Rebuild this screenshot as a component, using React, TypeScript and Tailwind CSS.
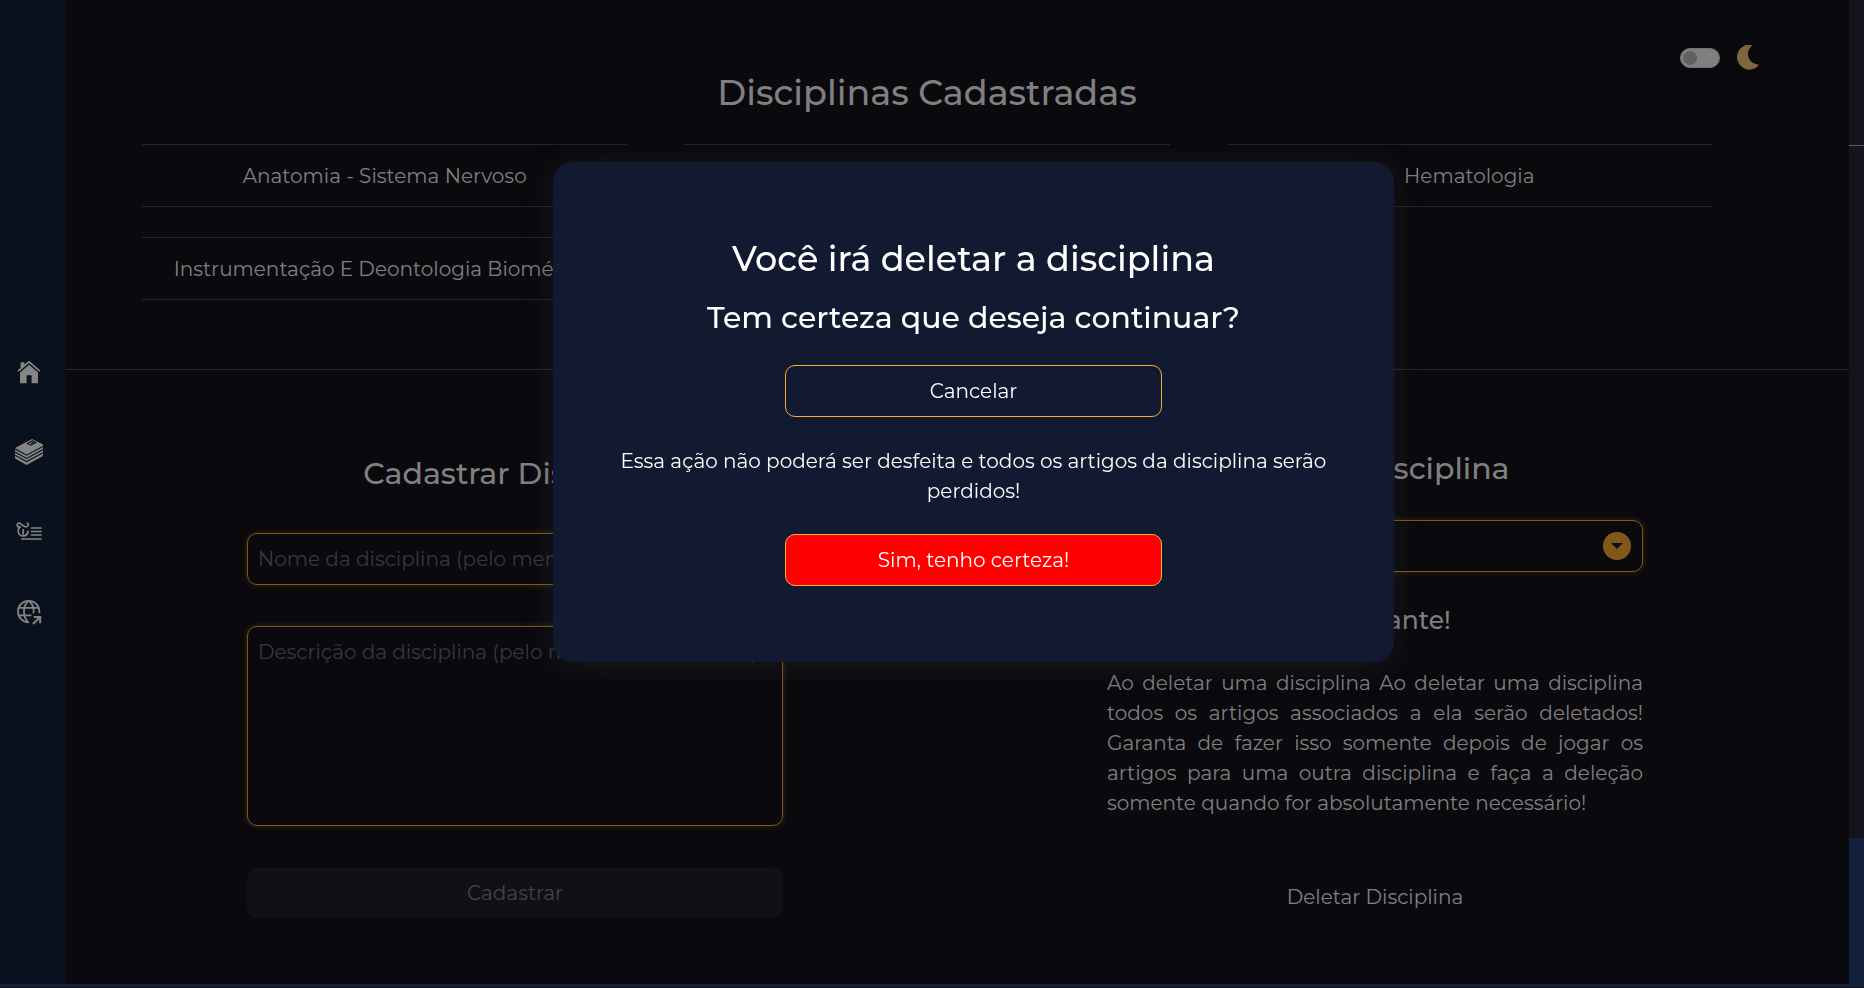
import React from "react";

const subjects = ["Anatomia - Sistema Nervoso", "Bioquímica", "Hematologia", "Instrumentação E Deontologia Biomédica"];

function HomeIcon() {
  return (
    <svg viewBox="0 0 24 24" className="size-6" fill="currentColor">
      <path d="M12 .8 7.400 4.600V2.200H3.600v5.600L.6 10.400l1.200 1.300L12 3l10.200 8.700 1.200-1.300z" />
      <path d="M12 4.800 3 12.600v10.600h6.600v-8h5v8H21V12.600z" />
    </svg>
  );
}

function BooksIcon() {
  return (
    <svg viewBox="0 0 28 26" className="h-[26px] w-7">
      <path d="M0 9 17 0l11 5.600V17L11.600 26 0 19.600z" fill="currentColor" />
      <g fill="none" stroke="#0a111e" strokeWidth="1.100">
        <path d="M0 9.800l11.600 6.400L28 7.400M0 13l11.600 6.400L28 10.600M0 16.200l11.600 6.400L28 13.800" />
        <path d="M18.400 1.200l-6 3.300 3.400 1.700 5-2.700-1.600-.8-3.200 1.700" />
      </g>
    </svg>
  );
}

function ArticleIcon() {
  return (
    <svg viewBox="0 0 26 20" className="h-5 w-[26px]" fill="none" stroke="currentColor" strokeWidth="1.700" strokeLinecap="round">
      <path d="M3.400 5.200C.6 5.200.6 1.200 3 1.200c2.400 0 3.800 3.600 6.800 3.600 2.800 0 3.400-2.800 1.600-3.600" />
      <path d="M4.200 4.800C.8 7.600 1.800 13.800 7 13.900c2.800 0 4.800-1.800 5-4.500M7.200 7.600v4.200" />
      <path d="M15.500 6H25M15.500 9.500H25M15.500 13H25M6 17H25" />
    </svg>
  );
}

function GlobeIcon() {
  return (
    <svg viewBox="0 0 26 26" className="size-[26px]" fill="none" stroke="currentColor" strokeWidth="1.800">
      <path d="M12.600 23.400C6.700 23.400 2 18.500 2 12.600S6.700 1.800 12.600 1.800s10.800 4.900 10.800 10.800v1.600" />
      <path d="M12.600 23.400c-6.200-5-6.200-16.600 0-21.600 4.400 3.200 5.400 7.800 5 12.600M3.200 8.800H22M3.200 16.400h12.200" />
      <path d="M17 25l6.400-6.400M17.800 18h6.400v6.200" strokeWidth="2" />
    </svg>
  );
}

const nav = [
  { label: "Início", Icon: HomeIcon },
  { label: "Disciplinas", Icon: BooksIcon },
  { label: "Artigos", Icon: ArticleIcon },
  { label: "Site", Icon: GlobeIcon },
];

const field =
  "block w-full rounded-[10px] border border-[#80591a] bg-transparent px-[10px] text-[20px] shadow-[0_0_6px_rgba(128,89,26,0.4)] outline-none placeholder:text-[#38383a]";

export default function App() {
  return (
    <div className="flex h-screen flex-col overflow-hidden bg-[#0a090d] font-[Montserrat,Inter,sans-serif] text-[#808080]">
      <div className="flex min-h-0 flex-1">
        <nav className="flex w-[66px] shrink-0 flex-col justify-center gap-[54px] bg-[#0a111e] pb-px pl-[15px] text-[#858683]">
          {nav.map(({ label, Icon }) => (
            <a key={label} href="#" aria-label={label} className="flex h-[26px] w-7 items-center justify-center">
              <Icon />
            </a>
          ))}
        </nav>

        <main className="min-w-0 flex-1">
          <section className="relative h-[370px] border-b border-[#29282c] pr-[137px] pl-[76px] pt-[70px]">
            <div className="absolute top-[45px] right-[89px] flex items-center gap-[17px]">
              <label className="flex h-5 w-10 items-center rounded-full border border-[#727272] bg-[#808080] px-[2px]">
                <input type="checkbox" aria-label="Alternar tema" className="size-[14px] appearance-none rounded-full bg-[#616161]" />
              </label>
              <svg viewBox="0 0 23 25" className="h-[25px] w-[23px]" fill="#80663f">
                <path d="M15.500 0A12.500 12.500 0 1 0 22.500 19.600 10.800 10.800 0 0 1 15.500 0z" />
              </svg>
            </div>
            <h1 className="text-center text-[35px] leading-[46px] font-medium">Disciplinas Cadastradas</h1>
            <ul className="mt-7 grid grid-cols-3 gap-x-[57px] gap-y-[30px] text-[20px]">
              {subjects.map((s) => (
                <li key={s} className="flex h-[63px] items-center justify-center border-y border-[#192c1d] whitespace-nowrap">
                  {s}
                </li>
              ))}
            </ul>
          </section>

          <div className="grid grid-cols-2 gap-x-[324px] pr-[206px] pl-[181px]">
            <form className="pt-[84px]">
              <h2 className="text-center text-[30px] leading-10 font-medium">Cadastrar Disciplina</h2>
              <input
                aria-label="Nome da disciplina"
                placeholder="Nome da disciplina (pelo menos 3 caracteres)"
                className={field + " mt-[39px] h-[52px]"}
              />
              <textarea
                aria-label="Descrição da disciplina"
                placeholder="Descrição da disciplina (pelo menos 10 caracteres)"
                className={field + " mt-[41px] h-[200px] resize-none py-[10px]"}
              />
              <button type="button" className="mt-[42px] h-[50px] w-full rounded-[10px] bg-[#111014] text-[20px] text-[#444446]">
                Cadastrar
              </button>
            </form>

            <form className="pt-[79px]">
              <h2 className="text-center text-[30px] leading-10 font-medium">Deletar Disciplina</h2>
              <div className="relative mt-[31px]">
                <select aria-label="Disciplina" defaultValue="" className={field + " h-[52px] appearance-none"}>
                  <option value=""></option>
                  {subjects.map((s) => (
                    <option key={s}>{s}</option>
                  ))}
                </select>
                <svg viewBox="0 0 28 28" className="pointer-events-none absolute top-3 right-3 size-7">
                  <circle cx="14" cy="14" r="14" fill="#80591a" />
                  <path d="M8 11h12l-6 6z" fill="#0a111e" />
                </svg>
              </div>
              <h3 className="mt-8 text-center text-[25px] leading-8 font-medium">Importante!</h3>
              <p className="mt-8 text-justify text-[20px] leading-[30px]">
                Ao deletar uma disciplina Ao deletar uma disciplina todos os artigos associados a ela serão deletados! Garanta de fazer
                isso somente depois de jogar os artigos para uma outra disciplina e faça a deleção somente quando for absolutamente
                necessário!
              </p>
              <button type="button" className="mt-[53px] h-[52px] w-full text-[20px]">
                Deletar Disciplina
              </button>
            </form>
          </div>
        </main>

        <div className="flex w-[15px] shrink-0 flex-col bg-[#14141e]">
          <div className="h-[146px] border-b border-[#5a5a60]" />
          <div className="mt-auto h-[146px] bg-[#14213d]" />
        </div>
      </div>
      <div className="h-1 shrink-0 border-b border-[#14141e] bg-[#14213d]" />

      <div className="fixed inset-0 flex items-start justify-center pt-[162px] pl-[83px]">
        <div
          role="dialog"
          aria-modal="true"
          aria-labelledby="dialog-title"
          className="flex w-[841px] flex-col items-center rounded-[20px] bg-[#111a30] px-[60px] pt-[72px] pb-[76px] text-center text-white shadow-[0_4px_30px_rgba(60,60,70,0.3)]"
        >
          <h2 id="dialog-title" className="text-[35px] leading-[50px] font-medium">
            Você irá deletar a disciplina
          </h2>
          <h3 className="mt-[13px] text-[30px] leading-[42px] font-medium">Tem certeza que deseja continuar?</h3>
          <button type="button" className="mt-[26px] h-[52px] w-[377px] rounded-[10px] border border-[#fcb030] text-[20px]">
            Cancelar
          </button>
          <p className="mt-[29px] text-[20px] leading-[30px]">
            Essa ação não poderá ser desfeita e todos os artigos da disciplina serão perdidos!
          </p>
          <button type="button" className="mt-7 h-[52px] w-[377px] rounded-[10px] border border-[#fcb030] bg-[#ff0000] text-[20px]">
            Sim, tenho certeza!
          </button>
        </div>
      </div>
    </div>
  );
}
